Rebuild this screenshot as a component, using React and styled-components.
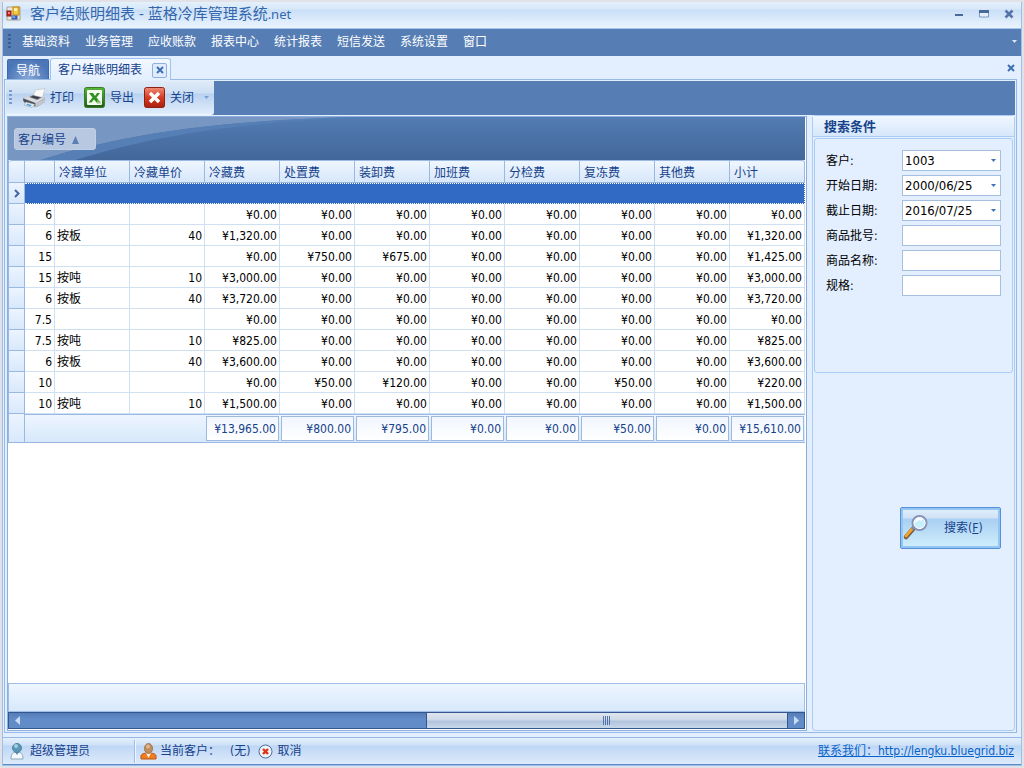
import React from 'react';
import styled, { createGlobalStyle } from 'styled-components';

const GlobalStyle = createGlobalStyle`
  * {
    box-sizing: border-box;
  }

  body {
    margin: 0;
    background: #e1e2e8;
    font-family: "DejaVu Sans Condensed", "Noto Sans CJK SC", sans-serif;
    font-size: 12px;
    line-height: 16px;
    color: #000;
  }

  button, input, select {
    font: inherit;
    color: inherit;
    margin: 0;
    padding: 0;
  }

  button {
    border: 0;
    background: none;
  }

  svg {
    display: block;
    flex: none;
  }
`;

const Page = styled.div`
  min-height: 100vh;
  padding: 2px;
  display: flex;
`;

const Window = styled.div`
  flex: 1;
  min-width: 0;
  display: flex;
  flex-direction: column;
  background: #e3eeff;
  border: solid #9cc0ec;
  border-width: 0 1px 1px;
`;

const TitleBar = styled.header`
  height: 27px;
  display: flex;
  align-items: center;
  gap: 9px;
  padding: 0 6px 3px 3px;
  background: linear-gradient(#e4f1fc 0, #d8e8f9 7px, #c9def6 8px, #e9f3fe 25px);
  border-bottom: 1px solid #a3c6ee;
`;

const WindowTitle = styled.h1`
  flex: 1;
  margin: 0;
  font-family: "Noto Sans", "Noto Sans CJK SC", sans-serif;
  font-size: 15px;
  font-weight: 400;
  line-height: 20px;
  color: #3467ac;

  small {
    font-size: 13px;
  }
`;

const WindowButtons = styled.div`
  display: flex;
  gap: 13px;
`;

const MenuBar = styled.nav`
  height: 27px;
  display: flex;
  align-items: center;
  gap: 15px;
  padding: 0 4px 2px 5px;
  background: #567eb5;
  color: #fff;
`;

const Grip = styled.span`
  width: 3px;
  height: 15px;
  margin-right: ${({ $gap }) => $gap};
  background: repeating-linear-gradient(${({ $color }) => $color} 0 2px, transparent 2px 4px);
`;

const Spacer = styled.span`
  flex: 1;
`;

const TabStrip = styled.div`
  height: 24px;
  display: flex;
  align-items: flex-end;
  gap: 1px;
  padding: 0 6px 0 4px;
  position: relative;
  z-index: 1;
  margin-bottom: -1px;
`;

const NavTab = styled.button`
  height: 20px;
  padding: 2px 8px 0;
  margin-bottom: 1px;
  color: #fff;
  background: radial-gradient(ellipse at 50% 100%, #86a8d8, #4b76b7 75%);
  border: 1px solid #3c68ad;
  border-bottom: 0;
  border-radius: 2px 2px 0 0;
`;

const ActiveTab = styled.div`
  height: 22px;
  display: flex;
  align-items: center;
  gap: 10px;
  padding: 1px 3px 0 7px;
  color: #15428b;
  background: linear-gradient(#f1f8ff, #e3eeff);
  border: 1px solid #a0c2ee;
  border-bottom: 0;
  border-radius: 3px 3px 0 0;
`;

const TabClose = styled.button`
  width: 15px;
  height: 15px;
  display: grid;
  place-items: center;
  background: #dfecfd;
  border: 1px solid #8fb0de;
  border-radius: 2px;
`;

const StripClose = styled.button`
  align-self: center;
`;

const Frame = styled.main`
  flex: 1;
  display: flex;
  flex-direction: column;
  margin: 0 4px 4px 1px;
  padding: 1px;
  border: 1px solid #97b9e6;
`;

const ToolBarRow = styled.div`
  height: 34px;
  display: flex;
  background: #567eb5;
`;

const ToolBar = styled.div`
  display: flex;
  align-items: center;
  padding: 0 5px 0 3px;
  color: #15428b;
  background: linear-gradient(#dfebf8 0, #cddff4 12px, #b9d1f0 13px, #e0eefc 100%);
  border-bottom: 1px solid #eef6ff;
  border-radius: 0 0 3px 0;
`;

const ToolButton = styled.button`
  display: flex;
  align-items: center;
  gap: ${({ $gap }) => $gap || '5px'};
  margin-right: 10px;
`;

const Workspace = styled.div`
  flex: 1;
  display: flex;
  gap: 5px;
`;

const GridPanel = styled.section`
  flex: 1;
  min-width: 0;
  display: flex;
  flex-direction: column;
  margin: 1px 0 0 1px;
  padding: 0 1px 1px 0;
  background: #fff;
  border: 1px solid #8caedb;
`;

const GroupPanel = styled.div`
  height: 43px;
  padding: 11px 6px;
  position: relative;
  background: linear-gradient(#527cb4, #436799);
`;

const Swoosh = styled.svg`
  position: absolute;
  inset: 0;
`;

const GroupChip = styled.button`
  position: relative;
  width: 82px;
  height: 22px;
  display: flex;
  align-items: center;
  gap: 6px;
  padding: 1px 3px 0;
  color: #15428b;
  background: #b7c8e0;
  border: 1px solid #c2d0e5;
  border-radius: 3px;
`;

const Table = styled.table`
  width: 100%;
  table-layout: fixed;
  border-collapse: separate;
  border-spacing: 0;
  border-left: 1px solid #9ab9e2;
`;

const HeadCell = styled.th`
  height: 23px;
  padding: 2px 4px 0;
  font-weight: 400;
  text-align: left;
  color: #15428b;
  background: linear-gradient(#eff6ff, #d7e7fa);
  border: solid #9ab9e2;
  border-width: 1px 1px 1px 0;

  &:first-child {
    border-top-left-radius: 3px;
  }

  &:last-child {
    border-top-right-radius: 3px;
  }
`;

const Cell = styled.td`
  height: 21px;
  padding: 2px 2px 0;
  line-height: 18px;
  text-align: ${({ $align }) => $align || 'right'};
  white-space: nowrap;
  background: #fff;
  border: solid #cfe0f3;
  border-width: 0 1px 1px 0;
`;

const Indicator = styled.td`
  padding: 0 0 0 5px;
  background: linear-gradient(#ecf4ff, #d8e8fb);
  border: solid #9ab9e2;
  border-width: 0 1px 1px 0;
`;

const SelectedCell = styled.td`
  height: 21px;
  padding: 0;
  background: #316ac5;
  border: 1px dotted #fff;
  border-left: 0;
`;

const FootCell = styled.td`
  height: 29px;
  padding: 0 0 0 1px;
  background: linear-gradient(#edf5ff, #d7e8fa);
  border: solid #9ab9e2;
  border-width: 1px 0;
`;

const Total = styled.output`
  display: block;
  height: 25px;
  padding: 4px 2px 0 0;
  margin-right: 1px;
  text-align: right;
  white-space: nowrap;
  color: #15428b;
  background: linear-gradient(#f1f6fe, #fff);
  border: 1px solid #9fb9de;
`;

const GridFooter = styled.div`
  height: 29px;
  margin-top: auto;
  background: linear-gradient(#eef6ff, #d7e8fb);
  border: 1px solid #9fbee6;
`;

const ScrollBar = styled.div`
  height: 17px;
  display: flex;
  background: linear-gradient(#557eb9, #628cc8 6px, #628cc8);
  border: 1px solid #33568f;
`;

const ScrollArrow = styled.button`
  width: 16px;
  display: grid;
  place-items: center;
`;

const ScrollTrack = styled.div`
  flex: 1;
  display: flex;
  justify-content: flex-end;
`;

const ScrollThumb = styled.div`
  width: ${({ $share }) => $share}%;
  display: grid;
  place-items: center;
  background: linear-gradient(#e0e6f0, #cdd8e7 7px, #b0c3dd 8px, #c8d8ea);
  border: solid #33568f;
  border-width: 0 1px;
`;

const Sidebar = styled.aside`
  width: 203px;
  display: flex;
  flex-direction: column;
  border: 1px solid #abccf3;
  border-radius: 3px;
`;

const SidebarTitle = styled.h2`
  height: 21px;
  margin: 0;
  padding: 0 11px;
  font-size: 13px;
  line-height: 22px;
  color: #15428b;
  background: linear-gradient(#f0f7ff, #d6e7fb);
  border-bottom: 1px solid #abccf3;
`;

const SearchForm = styled.form`
  display: flex;
  flex-direction: column;
`;

const Criteria = styled.div`
  min-height: 235px;
  display: flex;
  flex-direction: column;
  gap: 4px;
  margin: 1px;
  padding: 11px;
  border: 1px solid #abccf3;
  border-radius: 3px;
`;

const Field = styled.div`
  display: flex;
  align-items: center;
  justify-content: space-between;
`;

const Control = styled.div`
  position: relative;
  width: 99px;

  input, select {
    display: block;
    width: 100%;
    height: 21px;
    padding: 0 2px;
    font-size: 13px;
    appearance: none;
    background: #fff;
    border: 1px solid #a5bfe1;
    border-radius: 0;
    outline: none;
  }

  svg {
    position: absolute;
    top: 9px;
    right: 5px;
    pointer-events: none;
  }
`;

const SearchButton = styled.button`
  align-self: flex-end;
  width: 101px;
  height: 42px;
  display: flex;
  align-items: center;
  gap: 14px;
  margin: 133px 13px 0 0;
  padding: 0 1px;
  color: #15428b;
  background: linear-gradient(#e3f0fb 0, #cfe2f7 10px, #a9cff3 11px, #d0f0fb 100%);
  border: 1px solid #5590d9;
  border-radius: 2px;
  box-shadow: inset 0 0 0 2px #93c6f3;
`;

const StatusBar = styled.footer`
  height: 28px;
  display: flex;
  align-items: center;
  padding: 0 7px;
  color: #15428b;
  background: linear-gradient(#e4f0fd 0, #cfe1f8 7px, #bed6f5 8px, #deebfb 100%);
  border-top: 1px solid #94b8e5;
  border-bottom: 1px solid #5f89c4;
`;

const StatusItem = styled.span`
  display: flex;
  align-items: center;
  gap: ${({ $gap }) => $gap || '4px'};
  margin-right: ${({ $after }) => $after || '8px'};
`;

const Divider = styled.span`
  width: 2px;
  height: 23px;
  margin-right: 4px;
  background: #9dbde8;
  border-right: 1px solid #eef6ff;
`;

const CancelButton = styled.button`
  display: flex;
  align-items: center;
  gap: 4px;
`;

const ContactLink = styled.a`
  margin-left: auto;
  color: #0563c9;
`;

const menus = ['基础资料', '业务管理', '应收账款', '报表中心', '统计报表', '短信发送', '系统设置', '窗口'];

const columns = ['冷藏单位', '冷藏单价', '冷藏费', '处置费', '装卸费', '加班费', '分检费', '复冻费', '其他费', '小计'];

const rows = [
  ['6', '', '', '0.00', '0.00', '0.00', '0.00', '0.00', '0.00', '0.00', '0.00'],
  ['6', '按板', '40', '1,320.00', '0.00', '0.00', '0.00', '0.00', '0.00', '0.00', '1,320.00'],
  ['15', '', '', '0.00', '750.00', '675.00', '0.00', '0.00', '0.00', '0.00', '1,425.00'],
  ['15', '按吨', '10', '3,000.00', '0.00', '0.00', '0.00', '0.00', '0.00', '0.00', '3,000.00'],
  ['6', '按板', '40', '3,720.00', '0.00', '0.00', '0.00', '0.00', '0.00', '0.00', '3,720.00'],
  ['7.5', '', '', '0.00', '0.00', '0.00', '0.00', '0.00', '0.00', '0.00', '0.00'],
  ['7.5', '按吨', '10', '825.00', '0.00', '0.00', '0.00', '0.00', '0.00', '0.00', '825.00'],
  ['6', '按板', '40', '3,600.00', '0.00', '0.00', '0.00', '0.00', '0.00', '0.00', '3,600.00'],
  ['10', '', '', '0.00', '50.00', '120.00', '0.00', '0.00', '50.00', '0.00', '220.00'],
  ['10', '按吨', '10', '1,500.00', '0.00', '0.00', '0.00', '0.00', '0.00', '0.00', '1,500.00'],
];

const totals = ['13,965.00', '800.00', '795.00', '0.00', '0.00', '50.00', '0.00', '15,610.00'];

const fields = [
  { id: 'customer', label: '客户:', value: '1003' },
  { id: 'start', label: '开始日期:', value: '2000/06/25' },
  { id: 'end', label: '截止日期:', value: '2016/07/25' },
  { id: 'batch', label: '商品批号:' },
  { id: 'product', label: '商品名称:' },
  { id: 'spec', label: '规格:' },
];

const ArrowDown = ({ color }) => (
  <svg width="5" height="3" viewBox="0 0 5 3">
    <path d="M0 0h5L2.5 3z" fill={color} />
  </svg>
);

const Cross = () => (
  <svg width="8" height="8" viewBox="0 0 8 8">
    <path d="M1 1l6 6M7 1L1 7" stroke="#3f6fb5" strokeWidth="2" />
  </svg>
);

const AppIcon = () => (
  <svg width="15" height="15" viewBox="0 0 15 15">
    <path d="M1 1h13v13H1z" fill="#e9e6dc" stroke="#a9a392" />
    <rect x="1" y="5" width="4" height="5" fill="#c3251c" stroke="#8e1b14" />
    <rect x="2" y="6" width="2" height="2" fill="#ef8474" />
    <rect x="7" y="1" width="6" height="8" fill="#f8c93a" stroke="#c1860f" />
    <rect x="8" y="2" width="3" height="3" fill="#fff0a8" />
    <rect x="6" y="10" width="5" height="3" fill="#4477d3" stroke="#2b54a5" />
    <path d="M6 11h3" stroke="#a8c5f6" />
  </svg>
);

const PrinterIcon = () => (
  <svg width="24" height="20" viewBox="0 0 24 20">
    <path d="M13.500 2c3-.5 6-.5 9.500-1.500L20 11l-9-3z" fill="#f9f9f7" stroke="#b9bcc2" strokeWidth=".6" />
    <path d="M1 10l9-3 2 1 8 1 3 1v4l-8 5-9-1-5-5z" fill="#9da1a8" />
    <path d="M1 10l9-3 13 3-9 5z" fill="#d9dce1" />
    <path d="M7 9l4-2 9 2.500-5 2.500z" fill="#70757d" />
    <path d="M9 9l2-1 7 1.800-2.500 1z" fill="#2f3339" />
    <path d="M1 10.500l12 4.500v3L2 14z" fill="#4b5058" />
    <path d="M14 15l9-4v3l-9 5z" fill="#c3c6cc" />
    <path d="M4 14l9 2.500-3 3L2 17z" fill="#eef3f8" stroke="#8d949d" strokeWidth=".5" />
    <path d="M5 15.500l5 1.500-1.500 1.500-4.500-1.500z" fill="#5fa8dc" />
  </svg>
);

const ExcelIcon = () => (
  <svg width="21" height="21" viewBox="0 0 21 21">
    <defs>
      <linearGradient id="excel" x1="0" y1="0" x2="0" y2="1">
        <stop offset="0" stopColor="#57b83b" />
        <stop offset="1" stopColor="#1f5c17" />
      </linearGradient>
    </defs>
    <rect x=".5" y=".5" width="20" height="20" rx="2" fill="url(#excel)" stroke="#3c7a26" />
    <rect x="3" y="3" width="15" height="15" rx="1" fill="#f5fbf1" />
    <path d="M5 6h4l2 3 2-3h3l-3.500 4.500 4 5h-4l-2.500-3-2.500 3h-3l4-5z" fill="#31911f" />
    <path d="M13 13l4 1v3h-4z" fill="#9ccd88" opacity=".6" />
  </svg>
);

const CloseIcon = () => (
  <svg width="21" height="21" viewBox="0 0 21 21">
    <defs>
      <linearGradient id="close" x1="0" y1="0" x2="0" y2="1">
        <stop offset="0" stopColor="#ee8d78" />
        <stop offset=".5" stopColor="#d63b25" />
        <stop offset="1" stopColor="#a9200f" />
      </linearGradient>
    </defs>
    <rect x=".5" y=".5" width="20" height="20" rx="2" fill="url(#close)" stroke="#8f2012" />
    <path d="M6 6l9 9M15 6l-9 9" stroke="#fff" strokeWidth="3.500" />
  </svg>
);

const SearchIcon = () => (
  <svg width="28" height="28" viewBox="0 0 28 28">
    <path d="M4 23l7-8" stroke="#6d5d4a" strokeWidth="4.500" strokeLinecap="round" />
    <path d="M4 22l6-7" stroke="#f0a02c" strokeWidth="3" strokeLinecap="round" />
    <path d="M10 15l3-3" stroke="#83889a" strokeWidth="3" />
    <circle cx="17.500" cy="9" r="7" fill="#d0f1fb" stroke="#8893b3" strokeWidth="2" />
    <circle cx="17.500" cy="9" r="5.500" fill="#c4effb" stroke="#fff" strokeWidth="1" />
    <path d="M14 8c1-3 3.500-3.500 6-2" stroke="#fff" strokeWidth="2" fill="none" />
  </svg>
);

const UserIcon = () => (
  <svg width="14" height="17" viewBox="0 0 14 17">
    <path d="M1 16c0-5 2-7 6-7s6 2 6 7z" fill="#f5f9fd" stroke="#8aa7bb" />
    <path d="M5 9l2 3 2-3z" fill="#568eaa" />
    <circle cx="7" cy="5" r="4.500" fill="#5b97b6" stroke="#4c84a2" />
    <circle cx="6" cy="3" r="2" fill="#a5cede" />
  </svg>
);

const CustomerIcon = () => (
  <svg width="17" height="17" viewBox="0 0 17 17">
    <path d="M1 16v-3c0-2 3-3 7.500-3s7.500 1 7.500 3v3z" fill="#ef7d22" stroke="#bd5510" />
    <path d="M6 10l2.500 5 2.500-5z" fill="#fff1df" />
    <ellipse cx="8.500" cy="5.500" rx="4" ry="5" fill="#c08e5e" stroke="#a0764b" />
    <ellipse cx="8" cy="3.500" rx="2" ry="2" fill="#dcb68e" />
  </svg>
);

const CancelIcon = () => (
  <svg width="15" height="15" viewBox="0 0 15 15">
    <circle cx="7.500" cy="7.500" r="6.500" fill="#edf3fa" stroke="#4e6c98" />
    <path d="M5 5l5 5M10 5l-5 5" stroke="#e33212" strokeWidth="2.400" />
  </svg>
);

const GroupSwoosh = () => (
  <Swoosh width="480" height="43" viewBox="0 0 480 43">
    <path d="M0 0h345C230 3 125 14 33 43H0z" fill="#7896c2" />
    <path d="M345 0C230 3 125 14 33 43h34C150 18 230 5 360 0z" fill="#567fb6" />
  </Swoosh>
);

const DataGrid = () => (
  <Table>
    <colgroup>
      <col width="16" />
      <col width="30" />
      {columns.map((name) => <col key={name} />)}
    </colgroup>
    <thead>
      <tr>
        <HeadCell />
        <HeadCell />
        {columns.map((name) => <HeadCell key={name}>{name}</HeadCell>)}
      </tr>
    </thead>
    <tbody>
      <tr>
        <Indicator>
          <svg width="6" height="9" viewBox="0 0 6 9">
            <path d="M1 1l3.500 3.500L1 8" fill="none" stroke="#44679f" strokeWidth="2" />
          </svg>
        </Indicator>
        <SelectedCell colSpan={11} />
      </tr>
      {rows.map((row, index) => (
        <tr key={index}>
          <Indicator />
          {row.map((value, i) => (
            <Cell key={i} $align={i === 1 ? 'left' : 'right'}>
              {i > 2 ? `¥${value}` : value}
            </Cell>
          ))}
        </tr>
      ))}
    </tbody>
    <tfoot>
      <tr>
        <Indicator />
        <FootCell colSpan={3} />
        {totals.map((value, index) => (
          <FootCell key={index}>
            <Total>¥{value}</Total>
          </FootCell>
        ))}
      </tr>
    </tfoot>
  </Table>
);

const SearchPanel = () => (
  <Sidebar>
    <SidebarTitle>搜索条件</SidebarTitle>
    <SearchForm onSubmit={(e) => e.preventDefault()}>
      <Criteria>
        {fields.map(({ id, label, value }) => (
          <Field key={id}>
            <label htmlFor={id}>{label}</label>
            <Control>
              {value ? (
                <>
                  <select id={id}>
                    <option>{value}</option>
                  </select>
                  <ArrowDown color="#3f73b9" />
                </>
              ) : (
                <input id={id} type="text" />
              )}
            </Control>
          </Field>
        ))}
      </Criteria>
      <SearchButton type="submit">
        <SearchIcon />
        <span>搜索(<u>F</u>)</span>
      </SearchButton>
    </SearchForm>
  </Sidebar>
);

const App = () => {
  return (
    <Page>
      <GlobalStyle />
      <Window>
        <TitleBar>
          <AppIcon />
          <WindowTitle>客户结账明细表 - 蓝格冷库管理系统<small>.net</small></WindowTitle>
          <WindowButtons>
            <button aria-label="最小化">
              <svg width="12" height="10" viewBox="0 0 12 10"><path d="M2 6h8" stroke="#47699c" strokeWidth="2" /></svg>
            </button>
            <button aria-label="最大化">
              <svg width="12" height="10" viewBox="0 0 12 10">
                <path d="M1.500 2h9v6h-9z" fill="#e5effb" stroke="#7d9ac3" />
                <path d="M1 2.500h10" stroke="#47699c" strokeWidth="3" />
              </svg>
            </button>
            <button aria-label="关闭窗口">
              <svg width="12" height="10" viewBox="0 0 12 10">
                <path d="M2.500 1.500l7 7M9.500 1.500l-7 7" stroke="#5475a8" strokeWidth="2.500" />
              </svg>
            </button>
          </WindowButtons>
        </TitleBar>

        <MenuBar>
          <Grip $gap="-4px" $color="#36609c" />
          {menus.map((name) => <button key={name}>{name}</button>)}
          <Spacer />
          <ArrowDown color="#dbe8f8" />
        </MenuBar>

        <TabStrip>
          <NavTab>导航</NavTab>
          <ActiveTab>
            <button>客户结账明细表</button>
            <TabClose aria-label="关闭标签"><Cross /></TabClose>
          </ActiveTab>
          <Spacer />
          <StripClose aria-label="关闭页面"><Cross /></StripClose>
        </TabStrip>

        <Frame>
          <ToolBarRow>
            <ToolBar>
              <Grip $gap="10px" $color="#7b9dcd" />
              <ToolButton $gap="4px"><PrinterIcon />打印</ToolButton>
              <ToolButton><ExcelIcon />导出</ToolButton>
              <ToolButton><CloseIcon />关闭</ToolButton>
              <ArrowDown color="#7d9fcf" />
            </ToolBar>
          </ToolBarRow>

          <Workspace>
            <GridPanel>
              <GroupPanel>
                <GroupSwoosh />
                <GroupChip>
                  客户编号
                  <svg width="7" height="8" viewBox="0 0 7 8"><path d="M0 8h7L3.500 0z" fill="#597fb5" /></svg>
                </GroupChip>
              </GroupPanel>
              <DataGrid />
              <GridFooter />
              <ScrollBar>
                <ScrollArrow aria-label="向左滚动">
                  <svg width="5" height="9" viewBox="0 0 5 9"><path d="M5 0v9L0 4.500z" fill="#c9dbf3" /></svg>
                </ScrollArrow>
                <ScrollTrack>
                  <ScrollThumb $share={47.5}>
                    <svg width="8" height="9" viewBox="0 0 8 9">
                      <path d="M.5 0v9M2.500 0v9M4.500 0v9M6.500 0v9" stroke="#5074a8" />
                    </svg>
                  </ScrollThumb>
                </ScrollTrack>
                <ScrollArrow aria-label="向右滚动">
                  <svg width="5" height="9" viewBox="0 0 5 9"><path d="M0 0v9l5-4.500z" fill="#c9dbf3" /></svg>
                </ScrollArrow>
              </ScrollBar>
            </GridPanel>
            <SearchPanel />
          </Workspace>
        </Frame>

        <StatusBar>
          <StatusItem $gap="6px" $after="44px"><UserIcon />超级管理员</StatusItem>
          <Divider />
          <StatusItem $gap="3px" $after="10px"><CustomerIcon />当前客户：</StatusItem>
          <StatusItem>(无)</StatusItem>
          <CancelButton><CancelIcon />取消</CancelButton>
          <ContactLink href="http://lengku.bluegrid.biz">联系我们：http://lengku.bluegrid.biz</ContactLink>
        </StatusBar>
      </Window>
    </Page>
  );
};

export default App;
